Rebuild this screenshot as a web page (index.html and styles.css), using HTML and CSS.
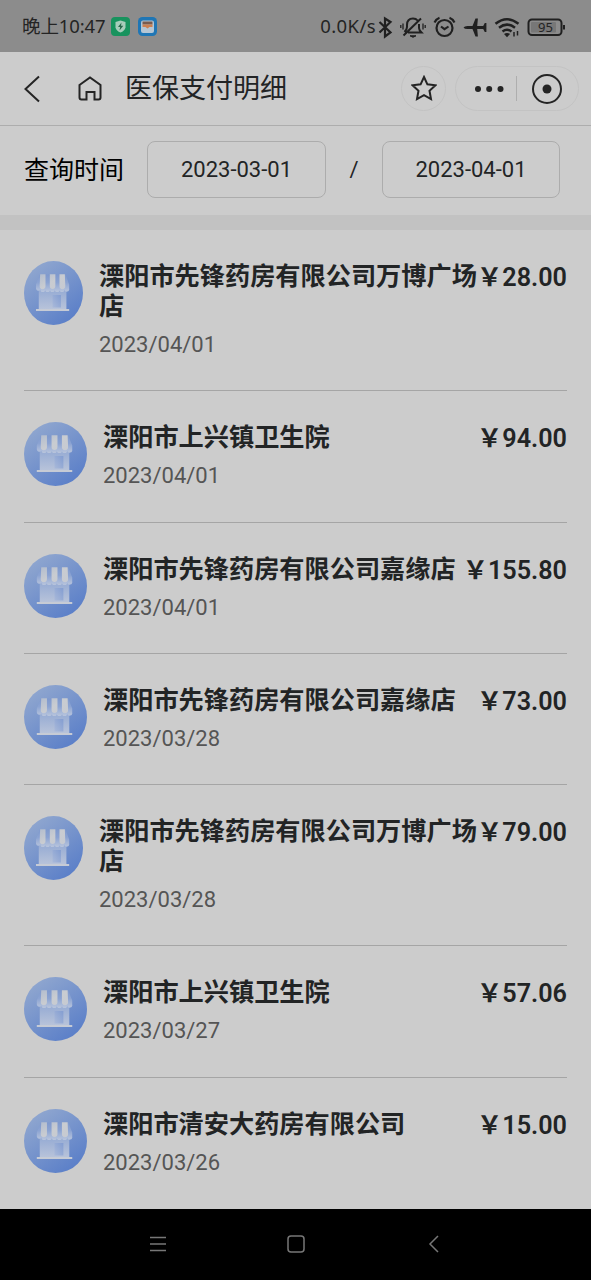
FILE: index.html
```html
<!DOCTYPE html>
<html lang="zh-CN">
<head>
<meta charset="utf-8">
<title>医保支付明细</title>
<link rel="stylesheet" href="styles.css">
</head>
<body>
<svg class="defs" width="0" height="0" aria-hidden="true">
  <defs>
    <linearGradient id="disc" x1="0.15" y1="0.1" x2="0.8" y2="1"><stop offset="0" stop-color="#8fa6cf"/><stop offset="1" stop-color="#587dc8"/></linearGradient>
    <linearGradient id="wall" x1="0" y1="0" x2="0" y2="1"><stop offset="0" stop-color="#93a9d3"/><stop offset="1" stop-color="#b9c4da"/></linearGradient>
    <linearGradient id="stripe" x1="0" y1="0" x2="0" y2="1"><stop offset="0" stop-color="#7f99cd"/><stop offset="0.45" stop-color="#8ba3d2"/><stop offset="1" stop-color="#b9c5dc"/></linearGradient>
    <linearGradient id="flap" x1="0" y1="0" x2="1" y2="1"><stop offset="0" stop-color="#b3bdce"/><stop offset="0.5" stop-color="#c9ccd1"/><stop offset="1" stop-color="#c6cad2"/></linearGradient>
    <linearGradient id="door" x1="1" y1="0" x2="0" y2="1"><stop offset="0" stop-color="#839dd1"/><stop offset="1" stop-color="#a9b9d9"/></linearGradient>
    <symbol id="shop" viewBox="0 0 64 64" preserveAspectRatio="none">
      <circle cx="32" cy="32" r="32" fill="url(#disc)"/>
      <path d="M16 27h30v22H16z" fill="url(#wall)"/>
      <path d="M17 13.500h28l4 10v4a2.600 2.600 0 0 1-5.200 1 2.600 2.600 0 0 1-5.200 0 2.600 2.600 0 0 1-5.200 0 2.600 2.600 0 0 1-5.200 0 2.600 2.600 0 0 1-5.200 0 2.600 2.600 0 0 1-5.200 0 2.600 2.600 0 0 1-4.800-1v-4z" fill="url(#stripe)"/>
      <path d="M17.500 13.300h5.800v11.700a3 3 0 0 1-6.300 0zM28 13.300h6v11.700a3 3 0 0 1-6 0zM38.500 13.300h5.800l.5 11.700a3 3 0 0 1-6.300 0z" fill="url(#flap)"/>
      <path d="M31 34h9v12.500h-9z" fill="url(#door)"/>
      <path d="M13 48h36v2H13z" fill="#c6cbd5"/>
    </symbol>
  </defs>
</svg>
<div class="phone">
  <header class="status">
    <span class="clock">晚上10:47</span>
    <svg class="app-icon" viewBox="0 0 19 19"><rect width="19" height="19" rx="4" fill="#18935e"/><path d="M9.500 3.500l5 1.500v5.500q-1 3.500-5 5-4-1.500-5-5V5z" fill="#a8cdbb"/><path d="M10.500 5.500L7 10h2.200L8.500 13.500l3.800-4.800H10z" fill="#28684b"/></svg>
    <svg class="app-icon second" viewBox="0 0 19 19"><rect width="19" height="19" rx="4.500" fill="#1f76b5"/><rect x="3" y="3.500" width="13" height="12.500" rx="2" fill="#b5c6d4"/><path d="M4.500 4.500h10v3h-10z" fill="#795c50"/><path d="M4.500 7.500h10v2.500h-3l-2 1.500-2-1.500h-3z" fill="#cc8051"/></svg>
    <span class="speed">0.0K/s</span>
    <svg class="tray" viewBox="0 0 190 24" fill="none" stroke="#202020" stroke-width="1.800">
      <path d="M2.500 7l11 10.500L8 21.500v-18L13.500 7 2.500 17.500" stroke-width="2.200"/>
      <g><path d="M27.500 17q2.500-2.500 2.500-5V10q0-6.500 6-6.500 3 0 4.600 2M42 9v4q0 2 2.500 4.500H31M26.500 20.500L44 3.500" stroke-width="2"/><path d="M33 20.800h6l-3 1.500z" fill="#202020" stroke-width="1"/><path d="M26 8.500v6M23.800 10v3M46 8.500v6M48.200 10v3" stroke-width="1.300"/></g>
      <circle cx="67.500" cy="13" r="8" stroke-width="2.200"/><path d="M64 11.500l3.500 2.700 4-2.700M57.500 7.500q1.500-3.500 5-4.800M77.500 7.500q-1.500-3.500-5-4.800" stroke-width="2.100"/>
      <path d="M86.500 12.500q1-1.500 4-1.500h5l3-7.500h2.400l-.7 7.500h6l1.600-3h1.600v9h-1.600l-1.600-3h-6l.7 7.500h-2.400l-3-7.500h-5q-3 0-4-1.500z" fill="#202020" stroke="none"/>
      <path d="M118.500 8.800q11.500-9.200 23 0M122 12.700q8-6.200 16 0M125.500 16.400q4.500-3.400 9 0" stroke-width="2.500"/><path d="M127 19q3-2.200 6 0l-3 3.300z" fill="#202020" stroke="none"/><path d="M137 17v4.500M140.500 16v4.500" stroke-width="1.500"/>
      <rect x="151.500" y="4.500" width="33" height="15.500" rx="3.500" stroke-width="2"/><rect x="154" y="7" width="25" height="10.500" rx="1" fill="#777" stroke="none"/><path d="M187 10v4.500" stroke-width="2"/>
      <text class="battery" x="168.500" y="17">95</text>
    </svg>
  </header>

  <nav class="titlebar">
    <svg class="back" viewBox="0 0 18 28"><path d="M16 1.500L2.500 14 16 26.500"/></svg>
    <svg class="home" viewBox="0 0 26 27"><path d="M2.500 10L13 2.500 23.500 10v12.500q0 2-2 2h-4V17h-8v7.500h-5q-2 0-2-2z"/></svg>
    <h1>医保支付明细</h1>
    <div class="star"><svg viewBox="0 0 26 27"><path d="M13 2l3.400 7.300 8 1-5.900 5.500 1.500 8.200-7-3.900L6 24l1.500-8.200-5.900-5.500 8-1z"/></svg></div>
    <div class="capsule">
      <svg class="dots" viewBox="0 0 30 8"><circle cx="4" cy="4" r="3"/><circle cx="15.200" cy="4" r="3"/><circle cx="26.500" cy="4" r="3"/></svg>
      <i class="split"></i>
      <svg class="target" viewBox="0 0 30 30"><circle cx="15" cy="15" r="14"/><circle class="core" cx="15" cy="15" r="4.500"/></svg>
    </div>
  </nav>

  <section class="filter">
    <span class="label">查询时间</span>
    <div class="date-box">2023-03-01</div>
    <span class="slash">/</span>
    <div class="date-box">2023-04-01</div>
  </section>

  <main class="list">
    <article class="row long"><svg class="shop"><use href="#shop"/></svg><div class="info"><h2>溧阳市先锋药房有限公司万博广场店</h2><time>2023/04/01</time></div><b class="price">￥28.00</b></article>
    <article class="row roomy"><svg class="shop"><use href="#shop"/></svg><div class="info"><h2>溧阳市上兴镇卫生院</h2><time>2023/04/01</time></div><b class="price">￥94.00</b></article>
    <article class="row"><svg class="shop"><use href="#shop"/></svg><div class="info"><h2>溧阳市先锋药房有限公司嘉缘店</h2><time>2023/04/01</time></div><b class="price">￥155.80</b></article>
    <article class="row"><svg class="shop"><use href="#shop"/></svg><div class="info"><h2>溧阳市先锋药房有限公司嘉缘店</h2><time>2023/03/28</time></div><b class="price">￥73.00</b></article>
    <article class="row long"><svg class="shop"><use href="#shop"/></svg><div class="info"><h2>溧阳市先锋药房有限公司万博广场店</h2><time>2023/03/28</time></div><b class="price">￥79.00</b></article>
    <article class="row roomy"><svg class="shop"><use href="#shop"/></svg><div class="info"><h2>溧阳市上兴镇卫生院</h2><time>2023/03/27</time></div><b class="price">￥57.06</b></article>
    <article class="row"><svg class="shop"><use href="#shop"/></svg><div class="info"><h2>溧阳市清安大药房有限公司</h2><time>2023/03/26</time></div><b class="price">￥15.00</b></article>
  </main>

  <footer class="sysnav">
    <svg viewBox="0 0 18 18"><path d="M1 2.500h16M1 9h16M1 15.500h16"/></svg>
    <svg viewBox="0 0 18 18"><rect x="1" y="1" width="16" height="16" rx="3"/></svg>
    <svg viewBox="0 0 18 18"><path d="M13 1L5 9l8 8"/></svg>
  </footer>
</div>
</body>
</html>
```

FILE: styles.css
```css
* { box-sizing: border-box; }
body {
  margin: 0;
  background: #ccc;
  color: #222425;
  font-family: Roboto, "Noto Sans CJK SC", sans-serif;
}
svg { display: block; flex: none; }
.defs { position: absolute; }
.phone {
  display: flex;
  flex-direction: column;
  width: 591px;
  height: 1280px;
  overflow: hidden;
}

.status {
  display: flex;
  align-items: center;
  flex: none;
  height: 52px;
  padding: 1px 24px 0 22px;
  background: #8c8c8c;
  color: #242424;
  font-family: "Noto Sans", "Noto Sans CJK SC", sans-serif;
  font-size: 18px;
  line-height: 24px;
  white-space: nowrap;
}
.clock { width: 89px; padding-bottom: 2px; font-size: 18.5px; letter-spacing: -0.1px; }
.app-icon { width: 19px; height: 19px; }
.second { margin-left: 8px; }
.speed { margin-left: auto; padding-bottom: 1px; font-size: 18.5px; letter-spacing: 0.4px; }
.tray { width: 190px; height: 24px; margin-left: 1px; }
.battery {
  fill: #242424;
  stroke: none;
  font: 13px "Noto Sans", sans-serif;
  text-anchor: middle;
}

.titlebar {
  display: flex;
  align-items: center;
  flex: none;
  height: 74px;
  padding: 0 12px 0 23px;
  border-bottom: 1px solid #adadad;
}
.titlebar svg { fill: none; stroke: #242424; stroke-width: 2; }
.back { width: 18px; height: 28px; }
.home { width: 26px; height: 27px; margin-left: 36px; }
.titlebar h1 {
  flex: 1;
  margin: 0 0 0 22px;
  padding-top: 1px;
  font-size: 27px;
  line-height: 36px;
  font-weight: 400;
}
.star {
  display: grid;
  place-items: center;
  width: 45px;
  height: 45px;
  border: 1px solid #c3c3c3;
  border-radius: 50%;
}
.star svg { width: 26px; height: 27px; }
.capsule {
  display: flex;
  align-items: center;
  width: 124px;
  height: 45px;
  margin-left: 9px;
  padding: 0 16px 0 18px;
  border: 1px solid #c3c3c3;
  border-radius: 23px;
}
.titlebar .dots { width: 30px; height: 8px; fill: #242424; stroke: none; }
.split { width: 1px; height: 25px; margin: 0 15px 0 12px; background: #aeaeae; }
.target { width: 30px; height: 30px; }
.target .core { fill: #242424; stroke: none; }

.filter {
  display: flex;
  align-items: center;
  flex: none;
  height: 104px;
  padding: 0 31px 2px 24px;
  border-bottom: 15px solid #c2c2c2;
  font-size: 22px;
}
.label { width: 123px; padding-bottom: 3px; color: #000; font-size: 25px; }
.date-box {
  width: 179px;
  height: 57px;
  border: 1.500px solid #acacac;
  border-radius: 8px;
  line-height: 56px;
  text-align: center;
}
.date-box:last-child { width: 178px; }
.slash { flex: 1; text-align: center; }

.list { flex: 1; min-height: 0; overflow: hidden; padding: 0 24px; }
.row {
  display: flex;
  align-items: flex-start;
  padding: 31px 0 30px;
  border-bottom: 1px solid #a5a5a5;
}
.roomy { padding-bottom: 31px; }
.row:last-child { border-bottom: 0; }
.shop { flex: none; width: 63px; height: 64px; }
.long .shop { width: 59px; }
.info { flex: 1; min-width: 0; margin-left: 16px; }
.info h2 {
  margin: 0 -2px 0 0;
  padding-top: 1px;
  font-size: 25.2px;
  line-height: 30px;
  font-weight: 600;
}
.info time {
  display: block;
  margin-top: 8px;
  color: #555;
  font-size: 22px;
  line-height: 30px;
}
.price {
  flex: none;
  padding-top: 2px;
  font-size: 25.2px;
  line-height: 30px;
  font-weight: 600;
  white-space: nowrap;
}

.sysnav {
  display: flex;
  justify-content: space-between;
  align-items: center;
  flex: none;
  height: 71px;
  padding: 0 148px 1px 149px;
  background: #000;
}
.sysnav svg { width: 18px; height: 18px; fill: none; stroke: #777; stroke-width: 1.500; }
```
